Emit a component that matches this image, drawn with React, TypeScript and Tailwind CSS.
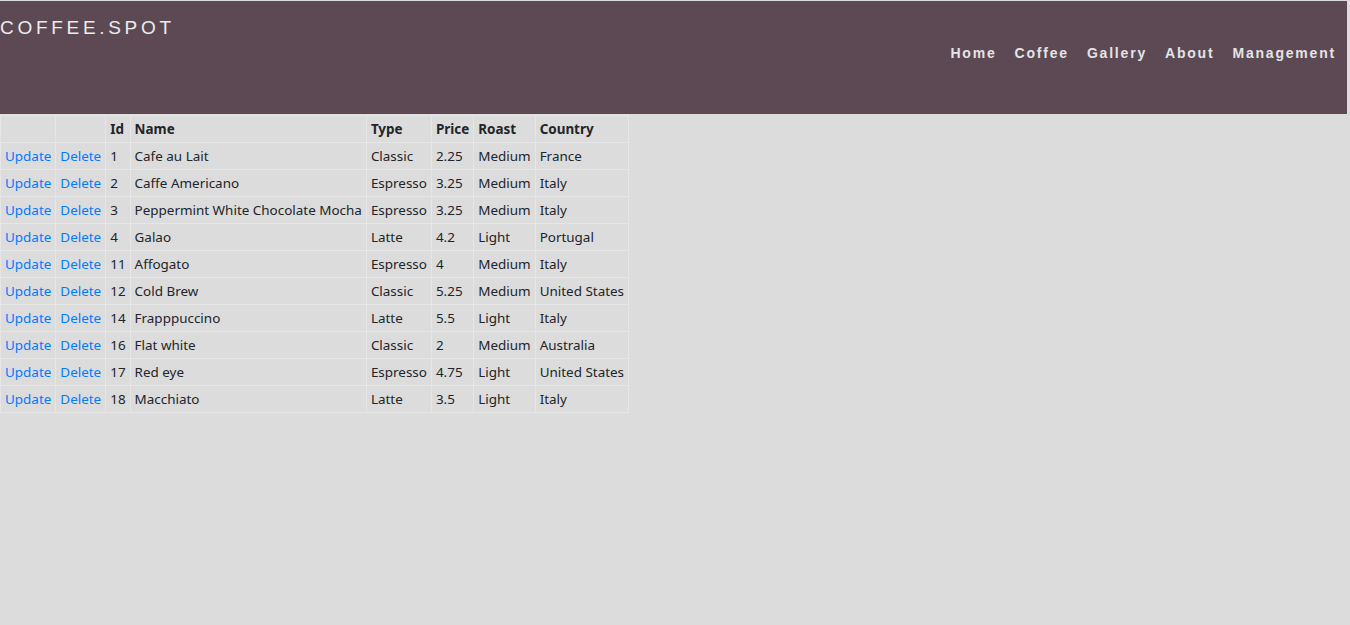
import React from "react";

const rows = [
  [1, "Cafe au Lait", "Classic", "2.25", "Medium", "France"],
  [2, "Caffe Americano", "Espresso", "3.25", "Medium", "Italy"],
  [3, "Peppermint White Chocolate Mocha", "Espresso", "3.25", "Medium", "Italy"],
  [4, "Galao", "Latte", "4.2", "Light", "Portugal"],
  [11, "Affogato", "Espresso", "4", "Medium", "Italy"],
  [12, "Cold Brew", "Classic", "5.25", "Medium", "United States"],
  [14, "Frapppuccino", "Latte", "5.5", "Light", "Italy"],
  [16, "Flat white", "Classic", "2", "Medium", "Australia"],
  [17, "Red eye", "Espresso", "4.75", "Light", "United States"],
  [18, "Macchiato", "Latte", "3.5", "Light", "Italy"],
];

const cell = "border border-[#e6e6e6] px-[4px] py-[4px] leading-[18px] text-left align-top whitespace-nowrap";

export default function App() {
  return (
    <div className="min-h-[625px] bg-[#dcdcdc] pt-px" style={{ fontFamily: '"Noto Sans", sans-serif' }}>
      <header className="h-[113px] bg-[#5d4954] mr-[3px] relative" style={{ fontFamily: '"Liberation Sans", Arial, sans-serif' }}>
        <div className="pt-[16px] text-[19px] leading-[22px] tracking-[3.7px] text-[#ececec]">COFFEE.SPOT</div>
        <nav className="absolute right-[11px] top-[43px] flex gap-[18px] text-[14px] font-bold tracking-[1.8px] text-[#e4e4e4] leading-[18px]">
          <span>Home</span>
          <span>Coffee</span>
          <span>Gallery</span>
          <span>About</span>
          <span>Management</span>
        </nav>
      </header>
      <table className="border-collapse mt-px text-[13.45px] text-[#212529]">
        <thead>
          <tr>
            <th className={cell}></th>
            <th className={cell}></th>
            <th className={cell + " font-bold"}>Id</th>
            <th className={cell + " font-bold"}>Name</th>
            <th className={cell + " font-bold"}>Type</th>
            <th className={cell + " font-bold"}>Price</th>
            <th className={cell + " font-bold"}>Roast</th>
            <th className={cell + " font-bold"}>Country</th>
          </tr>
        </thead>
        <tbody>
          {rows.map((r) => (
            <tr key={r[0] as number}>
              <td className={cell + " text-[#007bff]"}>Update</td>
              <td className={cell + " text-[#007bff]"}>Delete</td>
              {r.map((v, i) => (
                <td key={i} className={cell}>{v}</td>
              ))}
            </tr>
          ))}
        </tbody>
      </table>
    </div>
  );
}
